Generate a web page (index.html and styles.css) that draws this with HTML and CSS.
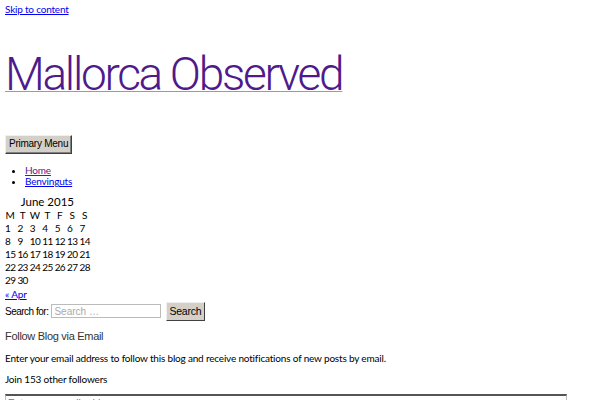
FILE: index.html
```html
<!DOCTYPE html>
<html>
<head>
<meta charset="utf-8">
<link rel="stylesheet" href="styles.css">
</head>
<body>
<a class="skip" href="#content">Skip to content</a>
<header class="site-header">
  <h1 class="site-title"><a href="#">Mallorca Observed</a></h1>
  <button class="menu-toggle">Primary Menu</button>
  <ul class="menu">
    <li><a class="visited" href="#">Home</a></li>
    <li><a href="#">Benvinguts</a></li>
  </ul>
</header>
<div class="widgets">
  <table class="calendar">
    <caption>June 2015</caption>
    <thead>
      <tr><th>M</th><th>T</th><th>W</th><th>T</th><th>F</th><th>S</th><th>S</th></tr>
    </thead>
    <tbody>
      <tr><td>1</td><td>2</td><td>3</td><td>4</td><td>5</td><td>6</td><td>7</td></tr>
      <tr><td>8</td><td>9</td><td>10</td><td>11</td><td>12</td><td>13</td><td>14</td></tr>
      <tr><td>15</td><td>16</td><td>17</td><td>18</td><td>19</td><td>20</td><td>21</td></tr>
      <tr><td>22</td><td>23</td><td>24</td><td>25</td><td>26</td><td>27</td><td>28</td></tr>
      <tr><td>29</td><td>30</td><td></td><td></td><td></td><td></td><td></td></tr>
    </tbody>
  </table>
  <div class="prev"><a href="#">« Apr</a></div>
  <form class="search">
    <label class="search-label">Search for:</label>
    <input class="search-field" type="text" placeholder="Search …">
    <button class="search-btn" type="button">Search</button>
  </form>
  <h2 class="widget-title">Follow Blog via Email</h2>
  <p class="widget-text first">Enter your email address to follow this blog and receive notifications of new posts by email.</p>
  <p class="widget-text">Join 153 other followers</p>
  <input class="email-field" type="text" placeholder="Enter your email address">
</div>
</body>
</html>
```
FILE: styles.css
```css
html, body {
  margin: 0;
  background: #fff;
}
body {
  padding: 3px 5px;
  font-family: "Lato", "Open Sans", sans-serif;
  font-size: 10px;
  line-height: 11px;
  letter-spacing: -0.18px;
  color: #000;
}
a {
  color: #0000ee;
}
a.visited {
  color: #551a8b;
}
.skip {
  display: inline-block;
  font-size: 10px;
  line-height: 12px;
  letter-spacing: -0.2px;
}
.site-title {
  margin: 34px 0 0;
  font-family: "Roboto", sans-serif;
  font-weight: 300;
  font-size: 46px;
  line-height: 50px;
  letter-spacing: -2.3px;
}
.site-title a {
  color: #4e1a8c;
  text-decoration-color: #a58cd0;
  text-decoration-thickness: 1px;
}
.menu-toggle {
  display: block;
  margin: 36px 0 0;
  padding: 2px 3px 3px;
  font-family: "Liberation Sans", Arial, sans-serif;
  font-size: 10px;
  line-height: 12px;
  letter-spacing: -0.25px;
  background: #d4d0c8;
  border: 1px solid;
  border-color: #f0f0f0 #404040 #404040 #f0f0f0;
  box-shadow: inset -1px -1px 0 #808080;
  color: #000;
}
.menu {
  margin: 11px 0 0;
  padding: 0 0 0 20px;
  list-style: disc;
}
.menu li {
  line-height: 11px;
}
.calendar {
  margin-top: 8px;
  border-collapse: separate;
  border-spacing: 2px;
  margin-left: -2px;
}
.calendar caption {
  font-size: 11.5px;
  line-height: 13px;
  letter-spacing: 0;
}
.calendar th,
.calendar td {
  padding: 0;
  font-weight: normal;
  text-align: left;
  line-height: 11px;
  height: 11px;
  letter-spacing: -0.6px;
}
.calendar th {
  text-align: center;
  letter-spacing: 0;
  min-width: 10px;
}
.prev {
  margin-top: 0;
  line-height: 13px;
}
.search {
  display: flex;
  align-items: center;
  margin-top: 0;
  height: 20px;
}
.search-label {
  font-family: "Liberation Sans", Arial, sans-serif;
  font-size: 10px;
  letter-spacing: -0.5px;
  margin-right: 3px;
}
.search-field {
  width: 104px;
  height: 12px;
  padding: 0 2px;
  margin: 0;
  border: 1px solid #bbb;
  font-family: "Liberation Sans", Arial, sans-serif;
  font-size: 10px;
}
.search-field::placeholder {
  color: #aaa;
}
.search-btn {
  margin-left: 5px;
  padding: 2px 2px 3px;
  font-family: "Liberation Sans", Arial, sans-serif;
  font-size: 10.5px;
  line-height: 12px;
  letter-spacing: -0.2px;
  background: #d4d0c8;
  border: 1px solid;
  border-color: #f0f0f0 #404040 #404040 #f0f0f0;
  color: #000;
}
.widget-title {
  margin: 9px 0 0;
  font-family: "Liberation Sans", Arial, sans-serif;
  font-size: 11px;
  font-weight: normal;
  letter-spacing: -0.3px;
  color: #333;
  line-height: 13px;
}
.widget-text {
  margin: 10px 0 0;
  line-height: 11px;
}
.email-field {
  display: block;
  margin-top: 9px;
  width: 556px;
  height: 14px;
  padding: 0 2px;
  border: 1px solid #bbb;
  border-top: 2px solid #555;
  font-size: 10px;
}
```
